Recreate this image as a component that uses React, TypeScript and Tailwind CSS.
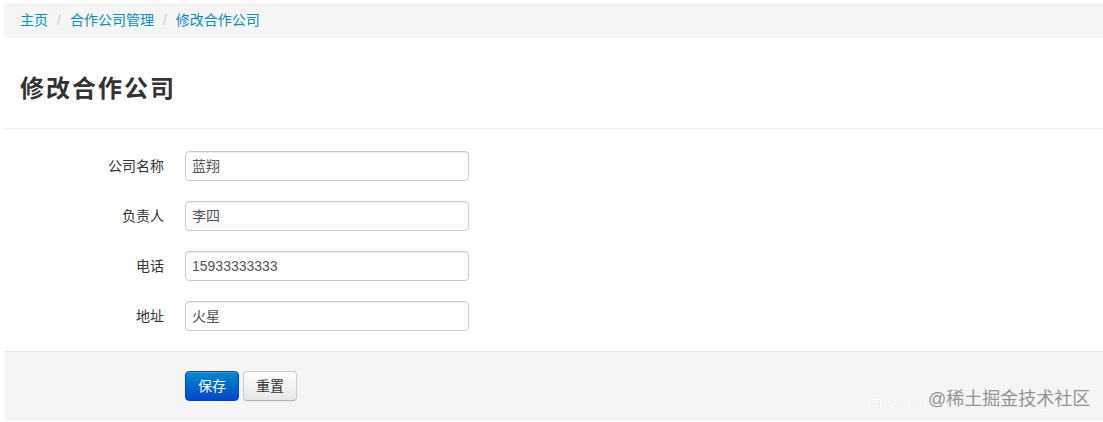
import React from "react";

const rows = [
  { label: "公司名称", value: "蓝翔" },
  { label: "负责人", value: "李四" },
  { label: "电话", value: "15933333333" },
  { label: "地址", value: "火星" },
];

export default function App() {
  return (
    <div
      className="w-[1103px] h-[422px] bg-white overflow-hidden relative"
      style={{ fontFamily: '"Liberation Sans", "Noto Sans CJK SC", sans-serif' }}
    >
      <div className="pt-[3px] pl-[4px]">
        <div className="h-[35px] bg-[#f5f5f5] rounded-l-[4px] flex items-center pl-[16px] text-[14px] text-[#0a8cbf]">
          <span>主页</span>
          <span className="text-[#cccccc] px-[9px]">/</span>
          <span>合作公司管理</span>
          <span className="text-[#cccccc] px-[9px]">/</span>
          <span>修改合作公司</span>
        </div>
      </div>
      <div className="h-[91px] flex items-center pt-[11px] border-b border-[#eeeeee] ml-[4px] pl-[16px]">
        <h1 className="text-[24px] font-bold text-[#333333] tracking-[2px]">修改合作公司</h1>
      </div>
      <div className="pt-[22px] flex flex-col gap-[20px]">
        {rows.map((r) => (
          <div key={r.label} className="flex items-center h-[30px]">
            <label className="w-[165px] text-right text-[14px] text-[#333333] pr-[1px]">{r.label}</label>
            <div className="ml-[20px] w-[284px] h-[30px] border border-[#cccccc] rounded-[4px] shadow-[inset_0_1px_1px_rgba(0,0,0,0.075)] flex items-center px-[6px] text-[14px] text-[#555555]">
              {r.value}
            </div>
          </div>
        ))}
      </div>
      <div className="mt-[20px] ml-[5px] h-[70px] bg-[#f5f5f5] border-t border-[#e5e5e5] flex items-start pt-[19px] pl-[180px] gap-[4px]">
        <button className="w-[54px] h-[30px] rounded-[4px] border border-[#0044cc] bg-gradient-to-b from-[#0088cc] to-[#0044cc] text-white text-[14px] shadow-[inset_0_1px_0_rgba(255,255,255,0.2)]">
          保存
        </button>
        <button className="w-[54px] h-[30px] rounded-[4px] border border-[#cccccc] border-b-[#b3b3b3] bg-gradient-to-b from-[#ffffff] to-[#e6e6e6] text-[#333333] text-[14px] shadow-[0_1px_2px_rgba(0,0,0,0.05)]">
          重置
        </button>
      </div>
      <div className="absolute left-[862px] top-[391px] text-[15px] text-[#ffffff] opacity-80 whitespace-nowrap" style={{ textShadow: "0 0 1px #dddddd" }}>
        https://blog.csdn.net/weixin_4399
      </div>
      <div className="absolute left-[928px] top-[386px] text-[18px] text-[#8a8a8a] whitespace-nowrap opacity-90">
        @稀土掘金技术社区
      </div>
    </div>
  );
}
